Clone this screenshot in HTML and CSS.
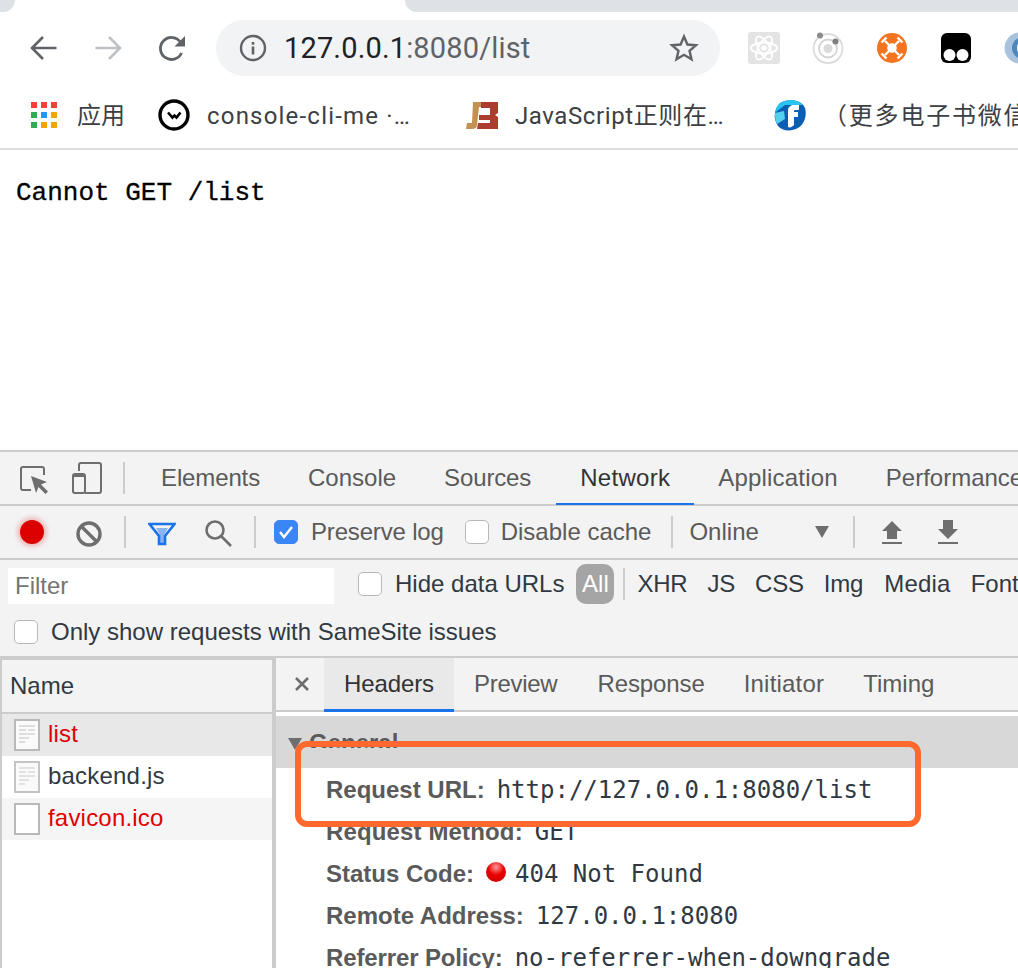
FILE: index.html
```html
<!DOCTYPE html>
<html lang="zh">
<head>
<meta charset="utf-8">
<title>127.0.0.1:8080/list</title>
<link rel="stylesheet" href="styles.css">
</head>
<body>
<div class="tabstrip"><div class="strip-left"></div><div class="strip-tab"></div><div class="strip-right"></div></div>

<div class="toolbar">
  <span class="nav-btn"><svg width="30" height="30" viewBox="0 0 30 30" fill="none" stroke="#5f6368" stroke-width="2.6"><path d="M27.5 15H3.5M14 4L3 15l11 11"/></svg></span>
  <span class="nav-btn"><svg width="30" height="30" viewBox="0 0 30 30" fill="none" stroke="#bdc1c6" stroke-width="2.6"><path d="M2.500 15H26.500M16 4l11 11-11 11"/></svg></span>
  <span class="nav-btn"><svg width="30" height="30" viewBox="0 0 30 30" fill="none"><path d="M24.500 20a11 11 0 1 1-.8-10.500" stroke="#5f6368" stroke-width="2.800"/><path d="M28 3v10.500H17.500z" fill="#5f6368"/></svg></span>
  <div class="omnibox">
    <svg class="info" width="28" height="28" viewBox="0 0 28 28"><circle cx="14" cy="14" r="12" fill="none" stroke="#5f6368" stroke-width="2.400"/><rect x="12.700" y="12.500" width="2.600" height="8" fill="#5f6368"/><rect x="12.700" y="8" width="2.600" height="2.700" fill="#5f6368"/></svg>
    <span class="url"><span class="url-host">127.0.0.1</span>:8080/list</span>
    <svg class="star" width="30" height="30" viewBox="0 0 30 30"><path d="M15 3.500l3.400 8 8.600.7-6.500 5.700 2 8.400L15 21.800l-7.500 4.500 2-8.400L3 12.200l8.600-.7z" fill="none" stroke="#5f6368" stroke-width="2.400"/></svg>
  </div>
  <div class="extensions">
    <span class="ext"><svg width="32" height="32" viewBox="0 0 32 32"><rect width="32" height="32" rx="3" fill="#e4e4e4"/><g fill="none" stroke="#fff" stroke-width="1.800"><ellipse cx="16" cy="16" rx="13" ry="5.500"/><ellipse cx="16" cy="16" rx="13" ry="5.500" transform="rotate(60 16 16)"/><ellipse cx="16" cy="16" rx="13" ry="5.500" transform="rotate(120 16 16)"/></g><circle cx="16" cy="16" r="2.800" fill="#fff"/></svg></span>
    <span class="ext"><svg width="32" height="32" viewBox="0 0 32 32"><circle cx="16" cy="16.500" r="14.500" fill="none" stroke="#dcdcdc" stroke-width="1.800"/><circle cx="16" cy="16.500" r="9" fill="none" stroke="#d4d4d4" stroke-width="1.800"/><circle cx="16" cy="16.500" r="4.500" fill="#dadada"/><circle cx="8" cy="3.500" r="3" fill="#8b8b8b"/><circle cx="23.500" cy="9.500" r="3" fill="#7f7f7f"/></svg></span>
    <span class="ext"><svg width="32" height="32" viewBox="0 0 32 32"><circle cx="16" cy="16" r="15" fill="#f57421"/><g stroke="#fff" stroke-width="2.400"><path d="M9 9l14 14M23 9L9 23"/><path d="M5.500 10.500l5-5M21.500 5.500l5 5M5.500 21.500l5 5M21.500 26.500l5-5"/></g><circle cx="16" cy="16" r="4.800" fill="#fff"/></svg></span>
    <span class="ext"><svg width="32" height="32" viewBox="0 0 32 32"><rect x="1" y="1" width="30" height="30" rx="6" fill="#000"/><circle cx="9.500" cy="23" r="6" fill="#fff"/><circle cx="22.500" cy="23" r="6" fill="#fff"/></svg></span>
    <span class="ext"><svg width="32" height="32" viewBox="0 0 32 32"><circle cx="16" cy="16" r="15.500" fill="#a9c3de"/><circle cx="19" cy="16" r="11" fill="#4f86bd"/><circle cx="22" cy="16" r="9" fill="#fff"/></svg></span>
  </div>
</div>

<div class="bookmarks">
  <div class="bm bm-apps">
    <svg width="26" height="26" viewBox="0 0 26 26"><rect width="6" height="6" fill="#f44336"/><rect x="10" width="6" height="6" fill="#f44336"/><rect x="20" width="6" height="6" fill="#f44336"/><rect y="10" width="6" height="6" fill="#34a853"/><rect x="10" y="10" width="6" height="6" fill="#2196f3"/><rect x="20" y="10" width="6" height="6" fill="#f4a300"/><rect y="20" width="6" height="6" fill="#34a853"/><rect x="10" y="20" width="6" height="6" fill="#f4a300"/><rect x="20" y="20" width="6" height="6" fill="#f4a300"/></svg>
    <span class="bm-text">应用</span>
  </div>
  <div class="bm">
    <svg width="32" height="32" viewBox="0 0 32 32" fill="none"><circle cx="16" cy="16" r="14" stroke="#000" stroke-width="3.400"/><path d="M10 13.500l4.500 5 2-2 2 2 4-5" stroke="#000" stroke-width="2.600"/></svg>
    <span class="bm-text bm-latin">console-cli-me ·…</span>
  </div>
  <div class="bm">
    <svg width="32" height="32" viewBox="0 0 32 32"><path d="M7 3h9v5h-3L11 26c-.5 3-2 4-5 4H0l1-6h5z" fill="#c29252"/><path d="M15 3h17v11l-3 2 3 2v12H11l1-6h12v-3H13v-5h11V9h-9z" fill="#ac3b30"/></svg>
    <span class="bm-text bm-mixed">JavaScript正则在…</span>
  </div>
  <div class="bm">
    <svg width="32" height="32" viewBox="0 0 32 32"><path d="M8 3C15 0 27 0 31 9c2 7 0 16-7 20-7 4-16 3-20-2-3-5-4-9-3-13 1-5 3-9 7-11z" fill="#0a5fb4"/><path d="M8 3c6-3 16-3 21 3H11L3 12 1 14c1-5 3-9 7-11z" fill="#29c4ef"/><path d="M1 14l9-2 1 8-8 5c-2-4-2-7-2-11z" fill="#55cfee"/><path d="M14 28V11c0-3 3-5 6-5h5v5h-4c-1 0-1 1-1 2h4v5h-4v8c-2 2-4 3-6 2z" fill="#fff"/></svg>
    <span class="bm-text bm-cjk">（更多电子书微信</span>
  </div>
</div>

<main class="page"><pre class="error">Cannot GET /list</pre></main>

<section class="devtools">
  <div class="dt-tabs">
    <svg class="dt-inspect" width="30" height="30" viewBox="0 0 30 30" fill="none"><path d="M11 25H3a2 2 0 0 1-2-2V4a2 2 0 0 1 2-2h19a2 2 0 0 1 2 2v6" stroke="#6e6e6e" stroke-width="2"/><path d="M11 11l16 6-6 2.500 7 7-2.500 2.500-7-7L16 28z" fill="#6e6e6e"/></svg>
    <svg class="dt-device" width="30" height="32" viewBox="0 0 30 32" fill="none"><path d="M7 9V3a2 2 0 0 1 2-2h18a2 2 0 0 1 2 2v26a2 2 0 0 1-2 2H13" stroke="#6e6e6e" stroke-width="2"/><rect x="1" y="12" width="12" height="19" rx="2" stroke="#6e6e6e" stroke-width="2"/><rect x="1" y="12" width="12" height="3" fill="#6e6e6e"/></svg>
    <span class="vsep dt-sep"></span>
    <span class="dt-tab dt-tab-tight">Elements</span>
    <span class="dt-tab">Console</span>
    <span class="dt-tab dt-tab-tight">Sources</span>
    <span class="dt-tab dt-tab-active">Network</span>
    <span class="dt-tab dt-tab-loose">Application</span>
    <span class="dt-tab">Performance</span>
  </div>

  <div class="net-toolbar">
    <span class="record"></span>
    <svg class="tool-clear" width="26" height="26" viewBox="0 0 26 26" fill="none" stroke="#6e6e6e" stroke-width="3.400"><circle cx="13" cy="13" r="11"/><path d="M5.500 5.500l15 15"/></svg>
    <span class="vsep sep-a"></span>
    <svg class="tool-filter" width="28" height="24" viewBox="0 0 28 24"><path d="M8 6h12l-4 7v9h-4v-9z" fill="#8ab4f0"/><path d="M1.500 2h25l-9.500 12v8h-6v-8z" fill="none" stroke="#1a73e8" stroke-width="2.600"/></svg>
    <svg class="tool-search" width="28" height="28" viewBox="0 0 28 28" fill="none" stroke="#6e6e6e" stroke-width="2.600"><circle cx="11" cy="11" r="8.500"/><path d="M17 17l10 10"/></svg>
    <span class="vsep sep-b"></span>
    <span class="check check-on check-preserve"><svg width="16" height="14" viewBox="0 0 16 14" fill="none" stroke="#fff" stroke-width="2.400"><path d="M2 7l4 5 8-10"/></svg></span>
    <span class="tool-text text-preserve">Preserve log</span>
    <span class="check check-disable"></span>
    <span class="tool-text text-disable">Disable cache</span>
    <span class="vsep sep-c"></span>
    <span class="tool-text text-online">Online</span>
    <span class="tri"></span>
    <span class="vsep sep-d"></span>
    <svg class="tool-up" width="20" height="24" viewBox="0 0 20 24"><path d="M10 1l10 10h-5v8H5v-8H0z" fill="#6e6e6e"/><rect y="22" width="20" height="2" fill="#6e6e6e"/></svg>
    <svg class="tool-down" width="20" height="24" viewBox="0 0 20 24"><path d="M5 0h10v9h5L10 19 0 9h5z" fill="#6e6e6e"/><rect y="22" width="20" height="2" fill="#6e6e6e"/></svg>
  </div>

  <div class="filter-row">
    <div class="filter-input">Filter</div>
    <span class="check check-hide"></span>
    <span class="filter-text text-hide">Hide data URLs</span>
    <span class="pill-all">All</span>
    <span class="filter-sep"></span>
    <span class="filter-text type-tight">XHR</span>
    <span class="filter-text type-tight">JS</span>
    <span class="filter-text type-tight">CSS</span>
    <span class="filter-text type-tight">Img</span>
    <span class="filter-text type-loose">Media</span>
    <span class="filter-text">Font</span>
  </div>

  <div class="samesite-row">
    <span class="check"></span>
    <span class="filter-text samesite-text">Only show requests with SameSite issues</span>
  </div>

  <div class="split">
    <div class="names">
      <div class="names-head">Name</div>
      <div class="req req-selected">
        <svg class="file" width="26" height="32" viewBox="0 0 26 32"><rect x="1" y="1" width="24" height="30" fill="#fafafa" stroke="#b9b9b9" stroke-width="2"/><path d="M5 7h16M5 11h7m2 0h7M5 15h16M5 19h10M5 23h6" stroke="#dedede" stroke-width="2"/></svg>
        <span class="req-err">list</span>
      </div>
      <div class="req">
        <svg class="file" width="26" height="32" viewBox="0 0 26 32"><rect x="1" y="1" width="24" height="30" fill="#fafafa" stroke="#c4c4c4" stroke-width="2"/><path d="M5 7h16M5 11h7m2 0h7M5 15h16M5 19h10M5 23h6" stroke="#e2e2e2" stroke-width="2"/></svg>
        <span>backend.js</span>
      </div>
      <div class="req req-alt">
        <svg class="file" width="26" height="32" viewBox="0 0 26 32"><rect x="1" y="1" width="24" height="30" fill="#fff" stroke="#b9b9b9" stroke-width="2"/></svg>
        <span class="req-err">favicon.ico</span>
      </div>
    </div>

    <div class="detail">
      <div class="detail-tabs">
        <span class="close"><svg width="14" height="14" viewBox="0 0 14 14" stroke="#6e6e6e" stroke-width="2.600"><path d="M1 1l12 12M13 1L1 13"/></svg></span>
        <span class="detail-tab detail-tab-active">Headers</span>
        <span class="detail-tab detail-tab-preview">Preview</span>
        <span class="detail-tab detail-tab-response">Response</span>
        <span class="detail-tab detail-tab-initiator">Initiator</span>
        <span class="detail-tab">Timing</span>
      </div>
      <div class="general"><span class="general-tri"></span><span class="general-title">General</span></div>
      <div class="rows">
        <div class="row"><b>Request URL:</b><code>http://127.0.0.1:8080/list</code></div>
        <div class="row"><b class="label-wide">Request Method:</b><code>GET</code></div>
        <div class="row"><b>Status Code:</b><span class="dot"></span><code class="status">404 Not Found</code></div>
        <div class="row"><b>Remote Address:</b><code>127.0.0.1:8080</code></div>
        <div class="row"><b class="label-narrow">Referrer Policy:</b><code>no-referrer-when-downgrade</code></div>
      </div>
    </div>
  </div>
</section>

<div class="callout"></div>
</body>
</html>
```

FILE: styles.css
```css
* { box-sizing: border-box; }
html, body { margin: 0; padding: 0; }
body {
  position: relative;
  width: 1018px;
  height: 968px;
  overflow: hidden;
  background: #fff;
  font-family: "Liberation Sans", Arial, sans-serif;
}

/* browser chrome */
.tabstrip { display: flex; height: 12px; }
.strip-left { width: 15px; background: #dee1e6; border-bottom-right-radius: 12px; }
.strip-tab { width: 390px; }
.strip-right { flex: 1; background: #dee1e6; border-bottom-left-radius: 12px; }

.toolbar { display: flex; align-items: center; height: 56px; margin-top: 8px; padding-left: 12px; }
.nav-btn { display: flex; align-items: center; justify-content: center; flex: none; width: 64px; }
.omnibox {
  display: flex; align-items: center; flex: none;
  width: 504px; height: 56px; margin-left: 12px; padding: 0 21px 0 23px;
  background: #f1f3f4; border-radius: 28px;
}
.url { margin-left: 17px; flex: 1; font: 29px Roboto, sans-serif; letter-spacing: .16px; color: #5f6368; white-space: nowrap; }
.url-host { color: #202124; }
.extensions { display: flex; flex: none; margin-left: 12px; }
.ext { display: flex; align-items: center; justify-content: center; flex: none; width: 64px; }

.bookmarks {
  display: flex; height: 54px; padding: 0 0 14px 31px;
  border-bottom: 2px solid #dddddf; margin-top: 20px;
  align-items: center; overflow: hidden;
}
.bm { display: flex; align-items: center; flex: none; width: 308px; gap: 17px; }
.bm svg { flex: none; }
.bm-apps { width: 127px; gap: 20px; }
.bm-text { margin-top: 2px; font: 24px/32px Roboto, "Noto Sans CJK SC", sans-serif; color: #3c4043; white-space: nowrap; }
.bm-latin { letter-spacing: 1.2px; }
.bm-mixed { letter-spacing: .6px; }
.bm-cjk { letter-spacing: 1.8px; }

/* page */
.page { height: 300px; padding: 29px 16px 0; }
.error { margin: 0; font: 26px/28px "Liberation Mono", "Courier New", monospace; color: #000; -webkit-text-stroke: .3px #000; }

/* devtools */
.devtools { height: 518px; background: #f3f3f3; border-top: 2px solid #ccc; font-size: 24px; color: #5a5a5a; }
.vsep { flex: none; width: 2px; height: 32px; background: #ccc; }

.dt-tabs { display: flex; align-items: center; height: 52px; box-sizing: content-box; border-bottom: 2px solid #ccc; white-space: nowrap; }
.dt-inspect { flex: none; margin: 4px 0 0 20px; }
.dt-device { flex: none; margin-left: 22px; }
.dt-sep { margin-left: 21px; margin-right: 12px; }
.dt-tab { display: flex; align-items: center; flex: none; height: 53px; padding: 0 24px 2px; margin-top: 1px; }
.dt-tab-tight { letter-spacing: -.13px; }
.dt-tab-loose { letter-spacing: .2px; }
.dt-tab-active { margin-left: 1px; color: #333; letter-spacing: .28px; box-shadow: inset 0 -2px #1a73e8; }

.net-toolbar { display: flex; align-items: center; height: 52px; box-sizing: content-box; border-bottom: 2px solid #ccc; white-space: nowrap; }
.record { flex: none; width: 24px; height: 24px; margin-left: 20px; border-radius: 50%; background: #dc0000; box-shadow: 0 0 4px 3px rgba(220, 0, 0, .22); }
.tool-clear { flex: none; margin: 4px 0 0 32px; }
.sep-a { margin-left: 22px; }
.tool-filter { flex: none; margin: 4px 0 0 22px; }
.tool-search { flex: none; margin: 2px 0 0 28px; }
.sep-b { margin-left: 22px; }
.check { display: flex; align-items: center; justify-content: center; flex: none; width: 24px; height: 24px; background: #fff; border: 1.5px solid #b8b8b8; border-radius: 5px; }
.check-on { background: #3b86f7; border-color: #3b86f7; }
.check-preserve { margin-left: 18px; }
.text-preserve { margin-left: 13px; letter-spacing: -.17px; }
.check-disable { margin-left: 21px; }
.text-disable { margin-left: 12px; }
.sep-c { margin-left: 20px; }
.text-online { margin-left: 16px; }
.tri { flex: none; width: 0; height: 0; margin-left: 56px; border-left: 7px solid transparent; border-right: 7px solid transparent; border-top: 12px solid #6e6e6e; }
.sep-d { margin-left: 24px; }
.tool-up { flex: none; margin-left: 27px; }
.tool-down { flex: none; margin-left: 36px; }

.filter-row { display: flex; align-items: center; height: 48px; padding-left: 8px; white-space: nowrap; }
.filter-input { flex: none; width: 326px; height: 36px; margin-top: 4px; padding-left: 7px; background: #fff; line-height: 36px; color: #757575; }
.check-hide { margin: 0 0 0 24px; }
.filter-text { flex: none; margin-left: 20px; color: #303942; }
.text-hide { margin-left: 13px; }
.pill-all { flex: none; width: 38px; height: 40px; margin-left: 12px; background: #a5a5a5; border-radius: 10px; color: #fff; line-height: 40px; text-align: center; }
.filter-sep { flex: none; width: 2px; height: 32px; margin: 0 -6px 0 9px; background: #ccc; }
.type-tight { letter-spacing: -.2px; }
.filter-sep + .type-tight { margin-left: 18px; }
.type-loose { letter-spacing: .2px; margin-left: 21px; }

.samesite-row { display: flex; align-items: center; height: 48px; padding-left: 14px; }
.samesite-text { margin-left: 13px; }

.split { display: flex; height: 312px; border-top: 2px solid #ccc; }
.names { flex: none; width: 276px; border-left: 2px solid #ccc; border-right: 4px solid #ccc; background: #fff; color: #303942; }
.names-head { height: 56px; padding-left: 8px; background: #f3f3f3; border-top: 2px solid #ccc; border-bottom: 2px solid #ccc; line-height: 52px; }
.req { display: flex; align-items: center; height: 42px; padding-left: 12px; }
.req-selected { background: #e8e8e8; }
.req-alt { background: #f5f5f5; }
.file { flex: none; }
.req span { margin: 0 0 2px 8px; letter-spacing: .2px; }
.req-err { color: #e00000; }

.detail { flex: 1; min-width: 0; background: #fff; }
.detail-tabs { display: flex; height: 54px; background: #f3f3f3; border-bottom: 2px solid #ccc; white-space: nowrap; }
.close { display: flex; align-items: center; justify-content: center; flex: none; width: 48px; height: 52px; padding: 0 0 0 4px; }
.detail-tab { flex: none; height: 54px; padding: 0 20px; line-height: 52px; }
.detail-tab-active { background: #e9e9e9; color: #333; letter-spacing: -.1px; box-shadow: inset 0 -3px #1a73e8; }
.detail-tab-preview { letter-spacing: -.28px; }
.detail-tab-response { letter-spacing: -.1px; }
.detail-tab-initiator { letter-spacing: .2px; padding: 0 19px; }

.general { display: flex; height: 52px; margin-top: 4px; padding-left: 12px; background: #d8d8d8; }
.general-tri { flex: none; width: 0; height: 0; margin-top: 22px; border-left: 7px solid transparent; border-right: 7px solid transparent; border-top: 12px solid #6e6e6e; }
.general-title { display: block; height: 18px; margin: 14px 0 0 7px; overflow: hidden; font-weight: bold; line-height: 26px; color: #5a5a5a; }

.rows { padding-top: 1px; }
.row { display: flex; align-items: center; height: 42px; padding-left: 50px; white-space: nowrap; }
.row b { color: #5a5a5a; }
.row .label-wide { letter-spacing: .14px; }
.row .label-narrow { letter-spacing: -.13px; }
.row code { margin-left: 12px; font: 24px "DejaVu Sans Mono", Menlo, monospace; color: #303942; }
.row .status { margin-left: 9px; }
.dot { flex: none; width: 20px; height: 20px; margin: -4px 0 0 12px; border-radius: 50%; background: radial-gradient(circle at 50% 25%, #ff9a9a 0, #e80000 45%, #c80000 100%); }

/* annotation drawn over the screenshot */
.callout { position: absolute; left: 295px; top: 741px; width: 626px; height: 86px; border: 6px solid #ff692e; border-radius: 12px; }
```
